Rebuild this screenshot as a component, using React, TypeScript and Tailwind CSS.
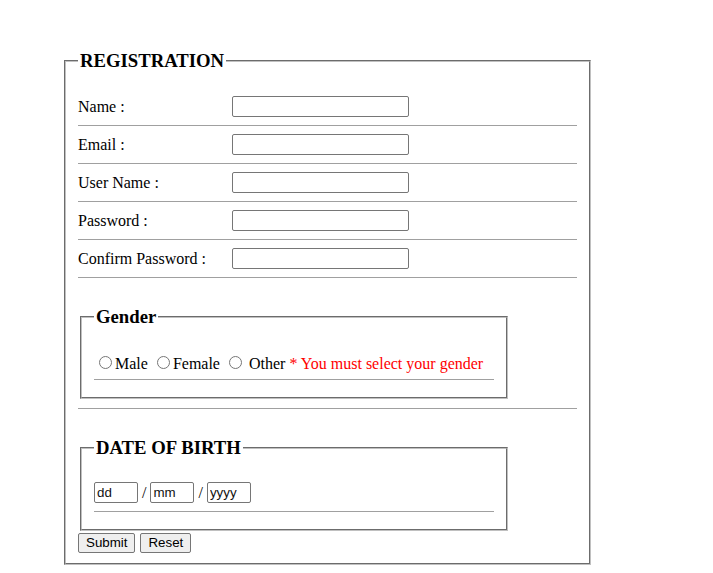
import type { ReactNode } from 'react'

const fields = ['Name :', 'Email :', 'User Name :', 'Password :', 'Confirm Password :']

function Rule({ className = '' }: { className?: string }) {
  return <div className={`h-px bg-[#a0a0a0] ${className}`} />
}

function Box({ title, children, className = '' }: { title: string; children: ReactNode; className?: string }) {
  return (
    <fieldset className={`border-2 [border-style:groove] border-[#c0c0c0] px-3 ${className}`}>
      <legend className="px-[2px] text-[18.72px] leading-[22px] font-bold">{title}</legend>
      {children}
    </fieldset>
  )
}

export default function App() {
  return (
    <div className="min-h-[573px] bg-white pl-[64px] pt-[50px] font-['Liberation_Serif',serif] text-[16px] text-black">
      <Box title="REGISTRATION" className="w-[527px] pt-[24px] pb-[10px]">
        {fields.map((label) => (
          <div key={label}>
            <div className="flex h-[21px] items-center">
              <span className="w-[154px] leading-[18px]">{label}</span>
              <input
                type={label.includes('Password') ? 'password' : 'text'}
                className="h-[21px] w-[177px] rounded-[2px] border border-[#767676] bg-white px-[2px] font-['Liberation_Sans',Arial,sans-serif] text-[13.33px]"
              />
            </div>
            <Rule className="my-2" />
          </div>
        ))}

        {/* Gender */}
        <Box title="Gender" className="mx-[2px] mt-[28px] w-[428px] pt-[25px] pb-[9px]">
          <div className="h-[18px] leading-[18px] whitespace-nowrap">
            <input type="radio" name="gender" className="mt-[3px] mr-[3px] ml-[5px] h-[13px] w-[13px]" />
            Male{' '}
            <input type="radio" name="gender" className="mt-[3px] mr-[3px] ml-[5px] h-[13px] w-[13px]" />
            Female{' '}
            <input type="radio" name="gender" className="mt-[3px] mr-[3px] ml-[5px] h-[13px] w-[13px]" /> Other{' '}
            <span className="text-[#ff0000]">* You must select your gender</span>
          </div>
          <Rule className="my-2" />
        </Box>

        <Rule className="mt-[9px]" />

        {/* Date of birth */}
        <Box title="DATE OF BIRTH" className="mx-[2px] mt-[28px] w-[428px] pt-[23px] pb-[9px]">
          <div className="flex h-[21px] items-center">
            {['dd', 'mm', 'yyyy'].map((p, i) => (
              <div key={p} className="flex items-center">
                {i > 0 && <span className="mx-1 leading-[18px]">/</span>}
                <input
                  placeholder={p}
                  className="h-[21px] w-[44px] rounded-[2px] border border-[#767676] bg-white px-[2px] font-['Liberation_Sans',Arial,sans-serif] text-[13.33px] placeholder:text-[#111]"
                />
              </div>
            ))}
          </div>
          <Rule className="my-2" />
        </Box>

        <div className="mt-[2px] flex gap-[5px] font-['Liberation_Sans',Arial,sans-serif] text-[13.33px]">
          <button className="h-[20px] rounded-[2px] border border-[#767676] bg-[#efefef] px-[7px] leading-[16px]">Submit</button>
          <button className="h-[20px] rounded-[2px] border border-[#767676] bg-[#efefef] px-[7px] leading-[16px]">Reset</button>
        </div>
      </Box>
    </div>
  )
}
